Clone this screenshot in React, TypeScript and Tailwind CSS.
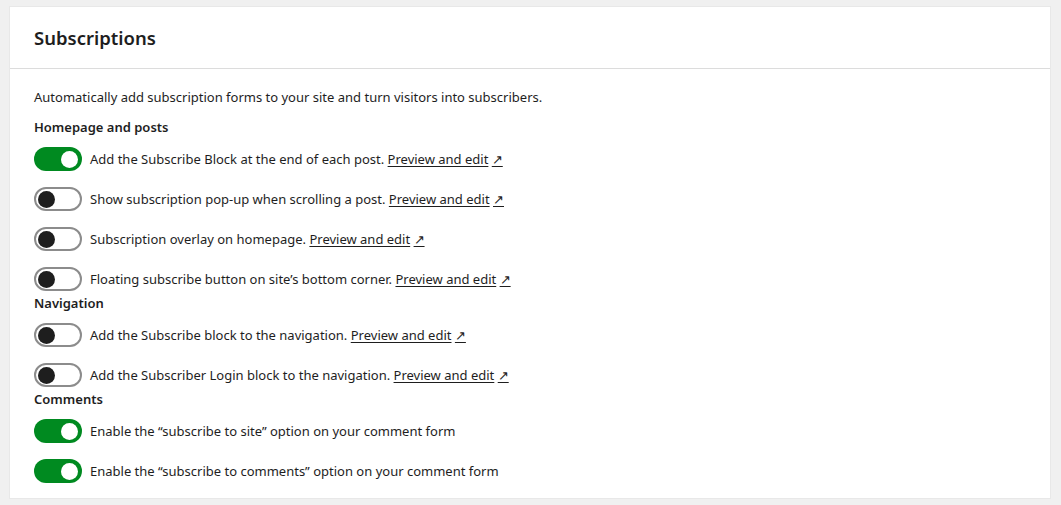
const font = { fontFamily: '"Noto Sans", "Open Sans", sans-serif' };

type Item = { label: string; on: boolean; link?: boolean };

const sections: { title: string; items: Item[] }[] = [
  {
    title: "Homepage and posts",
    items: [
      { label: "Add the Subscribe Block at the end of each post.", on: true, link: true },
      { label: "Show subscription pop-up when scrolling a post.", on: false, link: true },
      { label: "Subscription overlay on homepage.", on: false, link: true },
      { label: "Floating subscribe button on site’s bottom corner.", on: false, link: true },
    ],
  },
  {
    title: "Navigation",
    items: [
      { label: "Add the Subscribe block to the navigation.", on: false, link: true },
      { label: "Add the Subscriber Login block to the navigation.", on: false, link: true },
    ],
  },
  {
    title: "Comments",
    items: [
      { label: "Enable the “subscribe to site” option on your comment form", on: true },
      { label: "Enable the “subscribe to comments” option on your comment form", on: true },
    ],
  },
];

function Toggle({ on }: { on: boolean }) {
  return on ? (
    <span className="flex h-6 w-12 shrink-0 items-center justify-end rounded-full bg-[#008a20] pr-[4px]">
      <span className="h-[17px] w-[17px] rounded-full bg-white" />
    </span>
  ) : (
    <span className="flex h-6 w-12 shrink-0 items-center rounded-full border-2 border-[#8c8c8c] bg-white pl-[2px]">
      <span className="h-[17px] w-[17px] rounded-full bg-[#1e1e1e]" />
    </span>
  );
}

export default function App() {
  return (
    <div className="h-[505px] bg-[#f0f0f0] pt-[7px] pr-[11px] pl-[10px] pb-[7px]" style={font}>
      <div className="h-full bg-white text-[#1e1e1e] shadow-[0_0_0_1px_#e8e8e8]">
        <div className="flex h-[62px] items-center border-b border-[#dcdcdc] px-6">
          <h1 className="text-[18.5px] font-semibold">Subscriptions</h1>
        </div>
        <div className="px-6 pt-[18px] text-[13px]">
          <p className="leading-5">
            Automatically add subscription forms to your site and turn visitors into subscribers.
          </p>
          {sections.map((s, i) => (
            <div key={s.title}>
              <h2 className={`${i === 0 ? "mt-[10px]" : "mt-[2px]"} text-[13px] leading-5 font-semibold`}>
                {s.title}
              </h2>
              <div className="mt-[10px] flex flex-col gap-4">
                {s.items.map((it) => (
                  <div key={it.label} className="flex items-center gap-2 leading-5">
                    <Toggle on={it.on} />
                    <span>
                      {it.label}
                      {it.link && (
                        <>
                          {" "}
                          <a className="underline underline-offset-2">Preview and edit</a>{" "}
                          <span className="underline underline-offset-2">↗</span>
                        </>
                      )}
                    </span>
                  </div>
                ))}
              </div>
            </div>
          ))}
        </div>
      </div>
    </div>
  );
}
